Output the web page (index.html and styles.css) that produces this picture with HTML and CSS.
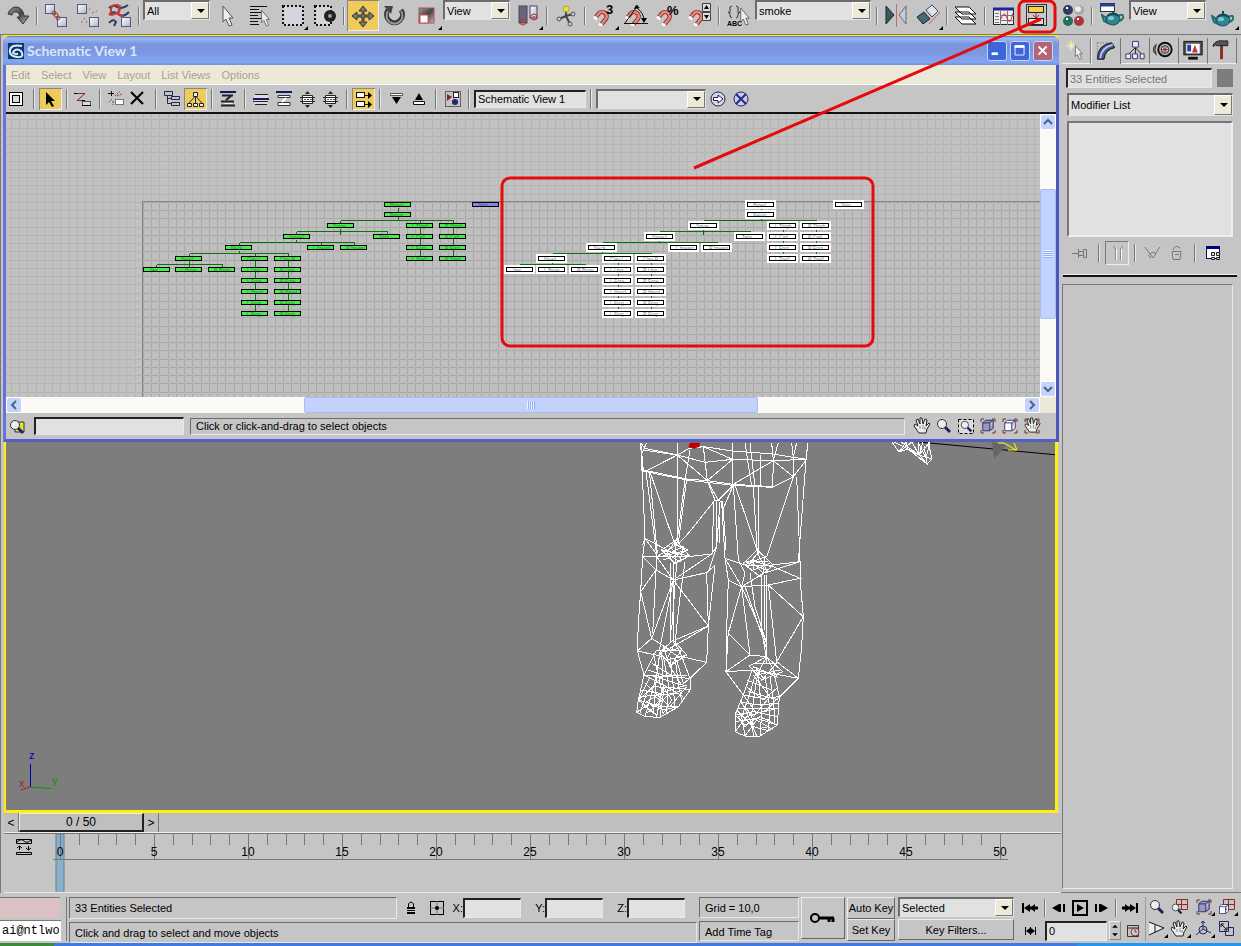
FILE: index.html
```html
<!DOCTYPE html>
<html lang="en">
<head>
<meta charset="utf-8">
<title>Schematic View 1</title>
<link rel="stylesheet" href="styles.css">
</head>
<body>
<svg class="defs" aria-hidden="true">
  <defs>
    <linearGradient id="metal" x1="0" y1="0" x2="1" y2="1"><stop offset="0" stop-color="#999"/><stop offset=".5" stop-color="#444"/><stop offset="1" stop-color="#bbb"/></linearGradient>
    <linearGradient id="box" x1="0" y1="0" x2="1" y2="1"><stop offset="0" stop-color="#fff"/><stop offset="1" stop-color="#b0b2cc"/></linearGradient>
    <symbol id="sq" viewBox="0 0 10 10"><rect x=".5" y=".5" width="9" height="9" fill="url(#box)" stroke="#555a80"/></symbol>
    <symbol id="fly" viewBox="0 0 4 4"><path d="M4 0V4H0Z" fill="#000"/></symbol>
    <symbol id="arrow" viewBox="0 0 14 22"><path d="M2 1V17L5 14L8 21L11 20L8 13H12Z" fill="#eee" stroke="#555"/></symbol>
    <symbol id="magnet" viewBox="0 0 20 20"><path d="M8 18L14 11C18 5 10 0 6 4L2 9" fill="none" stroke="#7c2520" stroke-width="5" transform="translate(1 1)"/><path d="M8 18L14 11C18 5 10 0 6 4L2 9" fill="none" stroke="#e98478" stroke-width="3" transform="translate(1 1)"/><path d="M7 17L11 20M1 9L5 12" stroke="#fff" stroke-width="3"/></symbol>
    <symbol id="teapot" viewBox="0 0 24 18"><path d="M4 8L1 6L3 12L7 14ZM17 7Q23 4 22 9Q21 12 17 12" fill="none" stroke="#236c78" stroke-width="2"/><ellipse cx="12" cy="10" rx="7" ry="6" fill="#2e8795" stroke="#1c4e58"/><path d="M6 7Q12 3 18 7M12 4V1" stroke="#164c56" fill="none" stroke-width="2"/><ellipse cx="10" cy="9" rx="3" ry="2" fill="#80c9cf"/></symbol>
    <symbol id="lens" viewBox="0 0 16 16"><path d="M9 9L14 14" stroke="#22226c" stroke-width="3"/><circle cx="6" cy="6" r="4.500" fill="#e8edf4" stroke="#333"/><path d="M4 6Q4 4 6 4" stroke="#fff" fill="none"/></symbol>
    <symbol id="hand" viewBox="0 0 18 18"><path d="M6 16L1 9L2 7L5 9L3 3L5 2L7 7V1H9L10 7L12 2L14 3L13 9L16 6L17 7L14 12L13 16Z" fill="#eee" stroke="#222"/><path d="M7 9V12M10 8V12M12 10V13" stroke="#888"/></symbol>
    <symbol id="cube" viewBox="0 0 16 16"><path d="M2 5H10V14H2ZM2 5L5 2H14L10 5M14 2V11L10 14" fill="var(--face)" stroke="#23236e"/></symbol>
    <symbol id="brk" viewBox="0 0 16 16"><path d="M1 4V1H4M12 1H15V4M15 12V15H12M4 15H1V12" fill="none" stroke="#7c3020"/></symbol>
    <symbol id="layer" viewBox="0 0 17 17"><path d="M3.500 4.500H13.500V12.500H3.500Z" fill="#fff" stroke="#222"/><path d="M1 6.500H16M1 10.500H16" stroke="#222"/><path d="M2 8.500H15" stroke="#555" stroke-dasharray="2 1"/><path d="M6 3L8.500 0L11 3ZM6 14L8.500 17L11 14Z" fill="#222"/></symbol>
  </defs>
</svg>

<div class="app">
  <header class="bar" aria-label="Main toolbar">
    <button class="tool" aria-label="Redo"><svg viewBox="0 0 32 30"><path d="M6 13C9 3 21 4 22 15H27L21 23L15 16H18C17 9 11 10 10 14Z" fill="url(#metal)" stroke="#333"/></svg></button>
    <i class="sep"></i>
    <button class="tool" aria-label="Link"><svg viewBox="0 0 32 30"><use href="#sq" x="5" y="3" width="10" height="10"/><use href="#sq" x="17" y="16" width="10" height="10"/><circle cx="14" cy="12" r="2" fill="none" stroke="#a0392b"/><circle cx="16" cy="14" r="2" fill="none" stroke="#a0392b"/><circle cx="18" cy="17" r="2" fill="none" stroke="#a0392b"/></svg></button>
    <button class="tool" aria-label="Unlink"><svg viewBox="0 0 32 30"><use href="#sq" x="5" y="3" width="10" height="10"/><use href="#sq" x="17" y="16" width="10" height="10"/><path d="M17 9L20 6M20 12L25 10M13 17L9 22M15 20L13 24" stroke="#b45" stroke-dasharray="2 2"/></svg></button>
    <button class="tool" aria-label="Bind to space warp"><svg viewBox="0 0 32 30"><path d="M5 7Q9 3 13 6T24 4M5 14Q9 9 14 13T25 11M5 22Q9 17 12 21L10 25" stroke="#2c3d68" stroke-width="2" fill="none"/><path d="M7 11Q6 4 12 4T15 11L8 14Q5 14 7 11M16 4L14 13L20 16" stroke="#c33" fill="none" stroke-width="2"/><use href="#sq" x="17" y="16" width="10" height="10"/></svg></button>
    <i class="sep"></i>
    <span class="combo filter"><select aria-label="Selection filter"><option>All</option></select></span>
    <button class="tool" aria-label="Select object"><svg viewBox="0 0 32 30"><use href="#arrow" x="8" y="4" width="14" height="22"/></svg></button>
    <button class="tool" aria-label="Select by name"><svg viewBox="0 0 32 30"><path d="M5 5.500H22M5 8.500H14M5 11.500H18M5 14.500H13M5 17.500H16M5 20.500H13M5 23.500H14" stroke="#111"/><use href="#arrow" x="15" y="8" width="11" height="18"/></svg></button>
    <button class="tool" aria-label="Selection region"><svg viewBox="0 0 32 30"><rect x="6" y="5" width="20" height="19" fill="#d5d5dc" stroke="#111" stroke-width="2" stroke-dasharray="2 2"/><use href="#fly" x="27" y="25" width="4" height="4"/></svg></button>
    <button class="tool" aria-label="Window crossing"><svg viewBox="0 0 32 30"><rect x="6" y="5" width="16" height="19" fill="#d5d5dc" stroke="#111" stroke-width="2" stroke-dasharray="2 2"/><circle cx="21" cy="15" r="6" fill="#222"/><circle cx="21" cy="15" r="2" fill="#99a"/></svg></button>
    <i class="sep"></i>
    <button class="tool on" aria-label="Move"><svg viewBox="0 0 32 30"><path d="M16 5L20 10H17V14H22V11L27 15L22 19V16H17V21H20L16 26L12 21H15V16H10V19L5 15L10 11V14H15V10H12Z" fill="#777" stroke="#333"/></svg></button>
    <button class="tool" aria-label="Rotate"><svg viewBox="0 0 32 30"><path d="M9 9A8 8 0 1 0 22 9" fill="none" stroke="#333" stroke-width="5"/><path d="M9 10A8 8 0 1 0 22 10" fill="none" stroke="#999" stroke-width="2"/><path d="M5 5L14 5L12 13Z" fill="#444"/></svg></button>
    <button class="tool" aria-label="Scale"><svg viewBox="0 0 32 30"><rect x="8" y="7" width="15" height="15" fill="url(#metal)" stroke="#a55"/><rect x="9" y="14" width="8" height="8" fill="#fff" stroke="#d44"/><use href="#fly" x="27" y="25" width="4" height="4"/></svg></button>
    <span class="combo coord"><select aria-label="Reference coordinate system"><option>View</option></select></span>
    <button class="tool" aria-label="Pivot center"><svg viewBox="0 0 32 30"><rect x="7" y="5" width="8" height="17" fill="#667" stroke="#446"/><rect x="18" y="5" width="7" height="12" fill="url(#box)" stroke="#446"/><circle cx="11" cy="21" r="3" fill="none" stroke="#b33"/><circle cx="22" cy="16" r="3" fill="none" stroke="#b33"/><circle cx="11" cy="21" r="1" fill="#b33"/><circle cx="22" cy="16" r="1" fill="#b33"/><use href="#fly" x="27" y="25" width="4" height="4"/></svg></button>
    <i class="sep"></i>
    <button class="tool" aria-label="Manipulate"><svg viewBox="0 0 32 30"><path d="M16 7V15L23 13M16 15L9 18M16 15L20 23" stroke="#444" stroke-width="2" fill="none"/><circle cx="16" cy="8" r="3" fill="#e9df35" stroke="#aa3"/><circle cx="23" cy="13" r="2" fill="#ccc" stroke="#555"/><circle cx="9" cy="18" r="2" fill="#ccc" stroke="#555"/><circle cx="20" cy="23" r="2" fill="#ccc" stroke="#555"/></svg></button>
    <i class="sep"></i>
    <button class="tool" aria-label="Snap"><svg viewBox="0 0 32 30"><use href="#magnet" x="5" y="8" width="17" height="17"/><text x="18" y="13" class="snap">3</text><use href="#fly" x="27" y="25" width="4" height="4"/></svg></button>
    <button class="tool" aria-label="Angle snap"><svg viewBox="0 0 32 30"><use href="#magnet" x="5" y="8" width="17" height="17"/><path d="M4 22.500H28M5 22L18 4M17 7Q24 12 24 20" stroke="#111" fill="none"/><path d="M14 8L16 4L20 7ZM21 17H27L24 22Z"/></svg></button>
    <button class="tool" aria-label="Percent snap"><svg viewBox="0 0 32 30"><use href="#magnet" x="4" y="8" width="17" height="17"/><text x="15" y="14" class="snap">%</text></svg></button>
    <button class="tool" aria-label="Spinner snap"><svg viewBox="0 0 32 30"><use href="#magnet" x="4" y="8" width="17" height="17"/><path d="M18.500 2.500H26.500V10.500H18.500ZM18.500 11.500H26.500V19.500H18.500Z" fill="#ddd" stroke="#444"/><path d="M20 8L22.500 4L25 8ZM20 14L22.500 18L25 14Z"/></svg></button>
    <i class="sep"></i>
    <button class="tool" aria-label="Named selection sets"><svg viewBox="0 0 32 30"><path d="M10 5Q7 5 8 9T6 11Q8 11 8 14T10 17M14 5Q17 5 16 9T18 11Q16 11 16 14T14 17" stroke="#333" fill="none"/><text x="5" y="25" class="abc">ABC</text><use href="#arrow" x="17" y="6" width="12" height="19"/></svg></button>
    <span class="combo sets"><select aria-label="Named selection set"><option>smoke</option></select></span>
    <i class="sep"></i>
    <button class="tool" aria-label="Mirror"><svg viewBox="0 0 32 30"><path d="M6 5L14 14L6 23Z" fill="#355c5b" stroke="#223"/><path d="M26 5L19 14L26 23Z" fill="#c2cbd6" stroke="#667"/><path d="M16.500 3V26" stroke="#c66"/></svg></button>
    <button class="tool" aria-label="Align"><svg viewBox="0 0 32 30"><path d="M5 16L12 11L18 18L11 23Z" fill="#456b73" stroke="#223"/><path d="M14 9L20 4L26 10L20 16Z" fill="#e0e4ea" stroke="#446"/><path d="M17 23L28 11" stroke="#d55"/><use href="#fly" x="27" y="25" width="4" height="4"/></svg></button>
    <i class="sep"></i>
    <button class="tool" aria-label="Layers"><svg viewBox="0 0 32 30"><path d="M5 16H19L26 23H12ZM5 11H19L26 18H12ZM5 6H19L26 13H12Z" fill="#fff" stroke="#111"/></svg></button>
    <i class="sep"></i>
    <button class="tool" aria-label="Curve editor"><svg viewBox="0 0 32 30"><rect x="5.500" y="7.500" width="20" height="16" fill="#eee" stroke="#223"/><path d="M5 8H26" stroke="#22229a" stroke-width="3"/><path d="M7 12.500H11M7 15.500H11M7 18.500H11M7 21.500H11M12.500 10V24M19.500 10V24M12 14.500H26M12 19.500H26" stroke="#777"/><path d="M13 18Q16 8 19 17T25 12" stroke="#c33" fill="none"/></svg></button>
    <button class="tool" aria-label="Schematic view"><svg viewBox="0 0 32 30"><rect x="6.500" y="3.500" width="20" height="21" fill="#c8c8c8" stroke="#333"/><rect x="8.500" y="5.500" width="15" height="6" fill="#f8d24a" stroke="#222"/><rect x="8.500" y="17.500" width="15" height="6" fill="#ddd" stroke="#222"/><path d="M16 12V16M13 14L16 17L19 14" stroke="#b22" fill="none"/></svg></button>
    <button class="tool material" aria-label="Material editor"><svg viewBox="0 0 32 30"><circle cx="11" cy="9" r="5" fill="#2e3c63"/><circle cx="22" cy="9" r="5" fill="#aaa"/><circle cx="21" cy="8" r="3" fill="#eee"/><circle cx="11" cy="20" r="5" fill="#23705a"/><circle cx="22" cy="20" r="5" fill="#a5373d"/><path d="M9 7H11M9 18H11M20 18H22" stroke="#fff" stroke-width="2"/></svg></button>
    <i class="sep"></i>
    <button class="tool" aria-label="Render scene"><svg viewBox="0 0 32 30"><use href="#teapot" x="6" y="8" width="24" height="18"/><rect x="5.500" y="2.500" width="14" height="8" fill="#fff" stroke="#333"/><path d="M5 4H20" stroke="#2c3c9a" stroke-width="3"/></svg></button>
    <span class="combo render"><select aria-label="Render type"><option>View</option></select></span>
    <button class="tool" aria-label="Quick render"><svg viewBox="0 0 32 30"><use href="#teapot" x="3" y="9" width="24" height="18"/><use href="#fly" x="27" y="25" width="4" height="4"/></svg></button>
  </header>

  <div class="work">
    <main class="stage">
      <div class="viewport">
        <svg class="scene" aria-label="Perspective viewport">
          <svg x="614" y="392" width="210" height="320" viewBox="0 0 630 960">
            <path class="mesh" d="M62 38L70 120L200 147L262 152L340 163L460 170L520 140L560 88L562 38M68 60L172 75L208 55L250 50L340 63L460 72L520 82L562 88M62 38L75 55L172 75L255 97L338 88L460 92L562 88M172 38V340M172 75L80 122M210 60L195 150M250 50L262 152M250 50L338 88L262 152M338 38V165M375 38L395 170M390 38L405 170M420 75V170M455 38L460 92L340 163M475 38L460 92L520 140M515 38L520 82L530 38M460 92L458 170M520 82V140M80 38L66 70M172 75L262 152M62 38L66 122L78 125L200 150L340 166L458 172"/>
            <path class="mesh" d="M65 80L75 325L108 370M78 125L110 375M88 122L112 370M90 125L165 345M200 147L175 340M195 150L170 345M262 152L285 210L205 310L172 345M262 152L295 210L340 165M290 210V345M280 215L278 370M300 215L290 350L265 425M305 215L315 385M298 260L300 340M285 210L308 215L318 360M75 325L68 380L62 485L55 580L52 663L72 735M68 345L75 325L160 370M68 380H110L205 380L275 372L290 350M68 380L108 420L160 450L260 428L285 405M110 380L160 450L275 372M108 375V420L98 610M108 420L62 485L95 625L160 450M160 400V640M150 400V640M170 400L155 600M160 450L265 588L165 630M265 588L150 655M260 428L265 588L260 697L185 680M285 405L265 588M195 395L180 500L165 640M160 450L118 660M52 663L95 625L150 660M52 663L130 680M260 697L210 745"/>
            <path class="mesh" d="M125 360L168 330L208 378L165 400ZM110 380L168 345L205 360L130 378L190 350L180 395L140 370L168 330L165 400M125 360L208 378M130 390L195 365M145 345L185 390M118 668L160 630L200 675L155 705ZM130 650L190 690L165 640L140 690L200 675M110 660H185L150 710L130 650M118 668L178 655"/>
            <path class="mesh" d="M110 660L72 735L55 810L50 847L75 860L120 862L175 830L210 780V745L185 680M72 735L210 745M90 735L185 765L210 745M55 810L100 770L180 775L210 780M55 810L125 830L175 830M62 780L120 790L200 765M50 847L90 820L130 840L175 830M75 860L95 790L110 735L120 665M120 862L130 790L125 665M140 850L145 760L130 680M165 840L160 770L150 680M185 810L175 760L165 680M72 735L140 770L190 800M100 670L125 780L110 860M90 740L55 810L110 855M75 760L150 830L200 770M110 735L100 850L75 830M150 710L185 765M80 850L140 800L185 780M130 735L80 790L60 850M95 700L160 740M170 690L190 760M85 720L130 735L200 735M60 800L170 790M80 815L105 800L120 810L100 830ZM130 770L155 810L130 850L118 820Z"/>
            <path class="mesh" d="M340 165L355 390M345 165L415 370M400 170L412 370M415 170V375M340 165L308 240M520 140L440 380M530 140L540 395M558 90L535 395M315 385L325 450L320 600L318 725L370 795M315 385L375 405L455 405L540 395M325 450L365 470L445 465L540 445L455 408M315 385L365 470L430 430L540 395V445L550 560L545 650L535 745L480 800M355 390L375 430L365 470L325 610L390 675L440 680M365 470L390 675M365 470L440 640M375 470L438 650M390 430L405 530L440 640M425 435V600L440 690M433 435V600M445 465L550 560L470 695ZM440 435V700M318 725L390 675M318 725L400 720L535 745L470 695M325 600L318 725"/>
            <path class="mesh" d="M370 400L412 360L460 405L420 440ZM375 405L435 380L430 430L390 390L455 410M380 415L412 370L440 420L375 395L445 395M400 380V420L450 400M388 708L440 680L488 725L425 750ZM400 710L470 740L440 680L410 735L480 720M400 700H470L430 745L405 710"/>
            <path class="mesh" d="M400 710L370 795L345 855V905L375 918H420L472 885L478 800L460 720M370 795L425 805L478 800M360 815L410 825L478 820M352 835H475M345 855L400 845L472 860M345 875L410 865L472 885M375 918L365 860L390 790L410 720M400 918L395 850L405 780L415 720M420 918L425 850L415 730M445 902L450 840L435 740M465 885L460 810L450 740M345 855L375 885L420 860L470 885M345 905L380 860L440 840L478 800M375 918L410 870L460 900M370 795L410 850L475 835M380 770L430 810L475 770M350 840L400 890L445 902M385 785L475 810M365 815L390 870L410 918M380 750L455 780M400 735L450 800L400 860L365 820M355 860L385 845L400 870L375 890ZM425 865L450 870L445 890L420 895Z"/>
            <path d="M210 38H240L238 50L222 56L205 52Z" fill="#c00000"/>
          </svg>
          <path class="black-line" d="M902 403L1052 417"/>
          <path class="mesh thin" d="M886 404L893 414L902 411L913 417L921 426L926 421L922 404M888 404L902 411L900 404L893 414L906 404L913 417L912 404L920 420L924 404L913 417L926 421M895 404L913 417L917 404M902 411L921 426L918 408"/>
          <path d="M986 404L1000 407L992 417L988 420Z" fill="#666"/>
          <path d="M998 405L1010 412M998 405H992M1002 412H1011L1008 405" stroke="#ff0" fill="none"/>
          <path d="M24.500 726V749" stroke="#00b"/><path d="M24 749L45 750.500" stroke="#090"/><path d="M24 749L15 752" stroke="#a22"/>
          <text x="23" y="721" class="axis" fill="#00b">z</text><text x="46" y="746" class="axis" fill="#090">y</text><text x="13" y="749" class="axis" fill="#a22">x</text>
        </svg>
      </div>

      <section class="window" aria-label="Schematic View 1">
        <div class="title">
          <svg class="logo" viewBox="0 0 16 16"><rect width="16" height="16" fill="#0d386e"/><path d="M14 3Q3 1 2 7T9 14T13 8Q9 5 6 8T10 11" fill="none" stroke="#d7f0fa" stroke-width="2"/></svg>
          <h1>Schematic View 1</h1>
          <button class="cap" aria-label="Minimize"><svg viewBox="0 0 20 20"><path d="M4 13H11" stroke="#fff" stroke-width="3"/></svg></button>
          <button class="cap" aria-label="Maximize"><svg viewBox="0 0 20 20"><path d="M4.500 4.500H14.500V14.500H4.500Z" stroke="#fff" fill="none"/><path d="M4 5H15" stroke="#fff" stroke-width="3"/></svg></button>
          <button class="cap close" aria-label="Close"><svg viewBox="0 0 20 20"><path d="M5 5L14 14M14 5L5 14" stroke="#fff" stroke-width="2"/></svg></button>
        </div>
        <nav class="menu"><button>Edit</button><button>Select</button><button>View</button><button>Layout</button><button>List Views</button><button>Options</button></nav>
        <div class="tools">
          <button class="tb" aria-label="Display floater"><svg viewBox="0 0 23 24"><rect x="3.500" y="5.500" width="13" height="13" fill="#fff" stroke="#000"/><rect x="6.500" y="8.500" width="7" height="7" fill="#ddd" stroke="#000"/></svg></button><i class="sep"></i>
          <button class="tb on" aria-label="Select"><svg viewBox="0 0 23 24"><path d="M7 4V17L10 14L13 19L15 18L12 13H16Z"/></svg></button><i class="sep"></i>
          <button class="tb" aria-label="Connect"><svg viewBox="0 0 23 24"><path d="M4 6.500H13L5 13.500H11" stroke="#8d2424" fill="none"/><path d="M2 6.500H5M10 13.500H13" stroke="#000"/><rect x="10.500" y="14.500" width="8" height="4" fill="#ddd" stroke="#555"/><path d="M10 18.500H19" stroke="#000"/></svg></button><i class="sep"></i>
          <button class="tb" aria-label="Unlink"><svg viewBox="0 0 23 24"><path d="M3 6.500H9M6.500 4V9" stroke="#111"/><path d="M10 9L15 4M7 12L4 15M8 14V18M12 9L17 7" stroke="#a33" stroke-dasharray="2 1"/><rect x="10.500" y="12.500" width="8" height="5" fill="#fff" stroke="#777"/></svg></button>
          <button class="tb" aria-label="Delete"><svg viewBox="0 0 23 24"><path d="M3 5L15 17M15 5L3 17" stroke="#000" stroke-width="2"/></svg></button><i class="sep"></i>
          <button class="tb" aria-label="Hierarchy"><svg viewBox="0 0 23 24"><path d="M3.500 4.500H11.500V8.500H3.500ZM10.500 9.500H18.500V12.500H10.500ZM10.500 15.500H18.500V18.500H10.500ZM6.500 8.500V16.500H10.500M6.500 11.500H10.500" fill="none" stroke="#22274e"/></svg></button>
          <button class="tb on" aria-label="References"><svg viewBox="0 0 23 24"><path d="M11.500 8L5 15M11.500 8V15M11.500 8L18 15" stroke="#333"/><path d="M9.500 4.500H13.500V8.500H9.500ZM3.500 15.500H7.500V18.500H3.500ZM9.500 15.500H13.500V18.500H9.500ZM15.500 15.500H19.500V18.500H15.500Z" fill="#eee" stroke="#223"/></svg></button><i class="sep"></i>
          <button class="tb" aria-label="Always arrange"><svg viewBox="0 0 23 24"><path d="M3 5H19" stroke="#171760" stroke-width="2"/><path d="M5 8.500H16M14 9L9 13M4 14.500H17M4 18.500H18" stroke="#222" stroke-width="2"/><path d="M7 16.500H15" stroke="#eee"/></svg></button><i class="sep"></i>
          <button class="tb" aria-label="Arrange children"><svg viewBox="0 0 23 24"><path d="M4 8H18V17H4Z" fill="#ddd"/><path d="M5 7.500H18M3 14.500H18M5 17.500H17" stroke="#222"/><path d="M3 12H19" stroke="#171770" stroke-width="2"/></svg></button>
          <button class="tb" aria-label="Arrange selected"><svg viewBox="0 0 23 24"><path d="M3 5H19" stroke="#171760" stroke-width="2"/><path d="M5 8.500H17V10.500H5ZM5 15.500H17V18.500H5Z" fill="#fff" stroke="#333"/><path d="M13 11L9 15" stroke="#fff" stroke-width="2"/></svg></button>
          <button class="tb" aria-label="Free all"><svg viewBox="0 0 23 24"><use href="#layer" x="3" y="4" width="17" height="17"/></svg></button>
          <button class="tb" aria-label="Free selected"><svg viewBox="0 0 23 24"><use href="#layer" x="3" y="4" width="17" height="17"/></svg></button><i class="sep"></i>
          <button class="tb on" aria-label="Move children"><svg viewBox="0 0 23 24"><rect x="4.500" y="4.500" width="8" height="5" fill="#fff" stroke="#111"/><rect x="4.500" y="13.500" width="8" height="5" fill="#fff" stroke="#111"/><path d="M12 7.500H17M12 16.500H17" stroke="#111"/><path d="M16 4L20 7.500L16 11ZM16 13L20 16.500L16 20Z"/></svg></button><i class="sep"></i>
          <button class="tb" aria-label="Expand"><svg viewBox="0 0 23 24"><path d="M5.500 6.500H17.500V8.500H5.500Z" fill="#fff" stroke="#555"/><path d="M7 10H16L11.500 17Z"/></svg></button>
          <button class="tb" aria-label="Collapse"><svg viewBox="0 0 23 24"><path d="M5.500 14.500H16.500V17.500H5.500Z" fill="#fff" stroke="#111"/><path d="M7 13H15L11 6Z"/></svg></button><i class="sep"></i>
          <button class="tb" aria-label="Preferences"><svg viewBox="0 0 23 24"><rect x="4.500" y="4.500" width="15" height="15" fill="none" stroke="#000" stroke-dasharray="1 1"/><path d="M6 7L11 10L6 14Z" fill="#823"/><rect x="12.500" y="5.500" width="5" height="5" fill="#fff" stroke="#222"/><circle cx="14" cy="15" r="3" fill="#23236e"/></svg></button><i class="sep"></i>
          <input class="field view-name" aria-label="View name" value="Schematic View 1"><i class="sep"></i>
          <span class="combo bookmark"><select aria-label="Bookmark"><option></option></select></span>
          <button class="tb" aria-label="Go to bookmark"><svg viewBox="0 0 23 24"><circle cx="12" cy="12" r="7" fill="#d8d8e4" stroke="#23235c"/><path d="M7.500 10.500H12V8L17 12L12 16V13.500H7.500Z" fill="#fff" stroke="#23235c"/></svg></button>
          <button class="tb" aria-label="Delete bookmark"><svg viewBox="0 0 23 24"><circle cx="12" cy="12" r="7" fill="#ccd" stroke="#23235c"/><path d="M7 7L17 17M17 7L7 17" stroke="#1f2b8c" stroke-width="2"/></svg></button>
        </div>
        <div class="graph">
          <svg class="canvas" aria-label="Schematic graph">
            <defs><pattern id="grid" x="137" y="88" width="33" height="33" patternUnits="userSpaceOnUse"><path d="M0 0H33V1H0ZM0 8H33V9H0ZM0 16H33V17H0ZM0 25H33V26H0ZM0 0V33H1V0ZM8 0V33H9V0ZM16 0V33H17V0ZM25 0V33H26V0Z"/></pattern></defs>
            <rect width="100%" height="100%" fill="url(#grid)" opacity=".45"/>
            <svg x="136" y="87" width="100%" height="100%"><rect width="100%" height="100%" class="world"/><rect width="100%" height="1" class="edge"/><rect width="1" height="100%" class="edge"/></svg>
            <rect x="137" y="88" width="100%" height="100%" fill="url(#grid)" opacity=".8"/>
            <g id="tree"></g>
          </svg>
          <div class="vscroll"><button class="sb" aria-label="Scroll up"><svg viewBox="0 0 14 14"><path d="M3 9L7 5L11 9"/></svg></button><i class="gap59"></i><i class="thumb v"></i><i class="gap62"></i><button class="sb" aria-label="Scroll down"><svg viewBox="0 0 14 14"><path d="M3 5L7 9L11 5"/></svg></button></div>
          <div class="hscroll"><button class="sb" aria-label="Scroll left"><svg viewBox="0 0 14 14"><path d="M9 3L5 7L9 11"/></svg></button><i class="gap282"></i><i class="thumb h"></i><i class="gap266"></i><button class="sb" aria-label="Scroll right"><svg viewBox="0 0 14 14"><path d="M5 3L9 7L5 11"/></svg></button></div>
          <div class="corner"></div>
        </div>
        <footer class="foot">
          <button class="tb" aria-label="Search"><svg viewBox="0 0 23 24"><path d="M9 7H18V17H9Z" fill="#e9df35" stroke="#333"/><use href="#lens" x="3" y="4" width="16" height="16"/></svg></button>
          <input class="field search" aria-label="Search name">
          <output class="sunk hint">Click or click-and-drag to select objects</output>
          <div class="nav-icons">
            <button class="nv" aria-label="Pan"><svg viewBox="0 0 22 20"><use href="#hand" x="2" y="1" width="18" height="18"/></svg></button>
            <button class="nv" aria-label="Zoom"><svg viewBox="0 0 22 20"><use href="#lens" x="3" y="2" width="16" height="16"/></svg></button>
            <button class="nv" aria-label="Zoom region"><svg viewBox="0 0 22 20"><rect x="3.500" y="3.500" width="15" height="14" fill="#ddd" stroke="#000" stroke-dasharray="3 2"/><use href="#lens" x="5" y="4" width="13" height="13"/></svg></button>
            <button class="nv dark" aria-label="Zoom extents"><svg viewBox="0 0 22 20"><use href="#brk" x="3" y="2" width="16" height="16"/><use href="#cube" x="4" y="2" width="14" height="15"/></svg></button>
            <button class="nv" aria-label="Zoom extents selected"><svg viewBox="0 0 22 20"><use href="#brk" x="3" y="2" width="16" height="16"/><use href="#cube" x="4" y="2" width="14" height="15"/></svg></button>
            <button class="nv" aria-label="Pan to selected"><svg viewBox="0 0 22 20"><use href="#brk" x="3" y="2" width="16" height="16"/><use href="#hand" x="3" y="1" width="17" height="17"/></svg></button>
          </div>
        </footer>
      </section>

      <div class="slider"><button class="step" aria-label="Previous frame">&lt;</button><button class="frame">0 / 50</button><button class="step" aria-label="Next frame">&gt;</button></div>
      <div class="track">
        <button class="curve" aria-label="Open mini curve editor"><svg viewBox="0 0 18 18"><path d="M1.500 1.500H16.500V5.500H1.500ZM1.500 14.500H16.500V16.500H1.500ZM4.500 12V8M2 10L4.500 8L7 10M13.500 8V12M11 10L13.500 12L16 10M2 4Q6 0 9 3T16 2" fill="none" stroke="#000"/></svg></button>
        <svg class="ruler" aria-label="Track bar"><g id="ticks"></g></svg>
      </div>
    </main>

    <aside class="panel">
      <div class="tabs">
        <button class="tab" aria-label="Create"><svg viewBox="0 0 28 26"><path d="M9 3V13M4 8H14M6 5L12 11M12 5L6 11" stroke="#fff8b0"/><use href="#arrow" x="11" y="7" width="12" height="16"/></svg></button>
        <button class="tab cur" aria-label="Modify"><svg viewBox="0 0 28 26"><path d="M5 21Q5 6 20 4L23 9Q13 11 12 21Z" fill="#425387" stroke="#111"/><path d="M8 20Q9 9 21 6" stroke="#b5c2e8" stroke-width="2" fill="none"/><path d="M5 4V20M5 4H20" stroke="#555" stroke-dasharray="1 2"/></svg></button>
        <button class="tab" aria-label="Hierarchy"><svg viewBox="0 0 28 26"><path d="M14.500 10L7 17M14.500 10V17M14.500 10L21 17" stroke="#222"/><path d="M11.500 3.500H17.500V9.500H11.500ZM4.500 16.500H9.500V21.500H4.500ZM11.500 16.500H16.500V21.500H11.500ZM19.500 16.500H23.500V21.500H19.500Z" fill="#eef" stroke="#336"/></svg></button>
        <button class="tab" aria-label="Motion"><svg viewBox="0 0 28 26"><circle cx="15" cy="12" r="7" fill="#bbb" stroke="#111" stroke-width="2"/><circle cx="15" cy="12" r="4" fill="#ddd" stroke="#333"/><path d="M15 8V16M11 12H19M12 9L18 15M18 9L12 15" stroke="#833"/><path d="M6 6Q3 12 6 18M4 8Q2 12 4 16" stroke="#111" fill="none"/></svg></button>
        <button class="tab" aria-label="Display"><svg viewBox="0 0 28 26"><rect x="4.500" y="3.500" width="19" height="14" fill="#555" stroke="#111"/><rect x="7" y="6" width="14" height="10" fill="#fff"/><path d="M8 7H12V14H8Z" fill="#24a"/><path d="M13 15L16 7L19 15Z" fill="#c34"/><path d="M9 21H19" stroke="#111" stroke-width="3"/></svg></button>
        <button class="tab" aria-label="Utilities"><svg viewBox="0 0 28 26"><path d="M13.500 8V22" stroke="#8c2d22" stroke-width="3"/><path d="M5 7Q8 2 15 3H20V8H9Q7 6 5 9Z" fill="#555" stroke="#222"/></svg></button>
      </div>
      <div class="name-row"><input class="field object-name" aria-label="Object name" value="33 Entities Selected"><button class="swatch" aria-label="Object color"></button></div>
      <span class="combo modifier"><select aria-label="Modifier list"><option>Modifier List</option></select></span>
      <div class="stack"></div>
      <div class="stack-tools">
        <button class="st" aria-label="Pin stack"><svg viewBox="0 0 24 24"><path d="M3 12.500H9M9.500 8V17M9.500 10.500H14.500V14.500H9.500M14.500 8.500H17.500V16.500H14.500Z" fill="none" stroke="#777"/></svg></button><i class="sep"></i>
        <button class="st end" aria-label="Show end result"><svg viewBox="0 0 24 24"><path d="M7 4L9.500 7V18M14.500 18V7L17 4" fill="none" stroke="#888"/><path d="M10.500 7V18M15.500 7V18" stroke="#fff"/></svg></button><i class="sep"></i>
        <button class="st" aria-label="Make unique"><svg viewBox="0 0 24 24"><path d="M4 6L9 13M19 6L14 13M9 13L12 17L15 13L12 11ZM7 14L10 17" fill="none" stroke="#777"/></svg></button>
        <button class="st" aria-label="Remove modifier"><svg viewBox="0 0 24 24"><path d="M7 10.500H16L15 18.500H8ZM8 9Q10 3 15 7M10 13.500H14" fill="none" stroke="#777"/></svg></button><i class="sep"></i>
        <button class="st" aria-label="Configure sets"><svg viewBox="0 0 24 24"><rect x="5.500" y="5.500" width="13" height="12" fill="#fff" stroke="#115"/><path d="M5 6.500H19" stroke="#00008b" stroke-width="3"/><path d="M10.500 11.500H13.500V14.500H10.500ZM15.500 11.500H18.500V14.500H15.500ZM10.500 16.500H13.500V18.500H10.500ZM15.500 16.500H18.500V18.500H15.500Z" fill="#ddd" stroke="#222"/></svg></button>
      </div>
      <hr>
      <div class="rollout"></div>
    </aside>
  </div>

  <footer class="status">
    <div class="listener"><output class="pink"></output><input aria-label="Script listener" value="ai@ntlwo"></div>
    <div class="info">
      <div class="row">
        <output class="sunk grow">33 Entities Selected</output>
        <button class="ico" aria-label="Lock selection"><svg viewBox="0 0 12 16"><path d="M3.500 8V4Q6 0 8.500 4V8" fill="none" stroke="#000"/><path d="M2 7H10V14H2Z"/><path d="M2 9.500H10M2 11.500H10" stroke="#ccc"/></svg></button>
        <button class="ico wide" aria-label="Absolute mode"><svg viewBox="0 0 16 16"><rect x="1.500" y="1.500" width="13" height="13" fill="none" stroke="#000"/><path d="M8 1V15M1 8H15" stroke="#777"/><circle cx="8" cy="8" r="2"/></svg></button>
        <label class="axis-in">X:<input class="field"></label><label class="axis-in">Y:<input class="field"></label><label class="axis-in">Z:<input class="field"></label>
      </div>
      <output class="sunk prompt">Click and drag to select and move objects</output>
    </div>
    <div class="gridinfo"><output class="sunk">Grid = 10,0</output><button class="sunk">Add Time Tag</button></div>
    <button class="raised bigkey" aria-label="Set keys"><svg viewBox="0 0 26 12"><circle cx="5" cy="6" r="4" fill="none" stroke="#000" stroke-width="2"/><path d="M9 6H24M19 6V10M23 6V10" stroke="#000" stroke-width="3"/></svg></button>
    <div class="keys"><button class="raised">Auto Key</button><button class="raised">Set Key</button></div>
    <div class="filters"><span class="combo"><select aria-label="Key set"><option>Selected</option></select></span><button class="raised">Key Filters...</button></div>
    <div class="play">
      <div class="row">
        <button class="pb" aria-label="Go to start"><svg viewBox="0 0 18 12"><path d="M2 1V11" stroke="#000" stroke-width="2"/><path d="M3 6L9 2V10ZM9 6L14 2V10Z"/><path d="M9 6H17" stroke="#000" stroke-width="3"/></svg></button><i class="sep"></i>
        <button class="pb" aria-label="Previous frame"><svg viewBox="0 0 18 12"><path d="M2 6L9 2V10Z"/><path d="M10 2V10M14 2V10" stroke="#000" stroke-width="2"/></svg></button>
        <button class="pb boxed" aria-label="Play"><svg viewBox="0 0 18 16"><rect x="2" y="1" width="14" height="14" fill="none" stroke="#000" stroke-width="2"/><path d="M6 4L13 8L6 12Z"/></svg></button>
        <button class="pb" aria-label="Next frame"><svg viewBox="0 0 18 12"><path d="M16 6L9 2V10Z"/><path d="M4 2V10M8 2V10" stroke="#000" stroke-width="2"/></svg></button><i class="sep"></i>
        <button class="pb" aria-label="Go to end"><svg viewBox="0 0 18 12"><path d="M16 1V11" stroke="#000" stroke-width="2"/><path d="M15 6L9 2V10ZM9 6L4 2V10Z"/><path d="M1 6H9" stroke="#000" stroke-width="3"/></svg></button>
      </div>
      <div class="row">
        <button class="pb" aria-label="Key mode"><svg viewBox="0 0 18 12"><path d="M4.500 2V10M14.500 2V10M9.500 2V10" stroke="#000"/><path d="M5 6L9 3V9ZM14 6L10 3V9Z"/></svg></button>
        <input class="field time" aria-label="Current frame" value="0">
        <button class="spin" aria-label="Step frame"><svg viewBox="0 0 10 18"><path d="M2 6L5 3L8 6ZM2 12L5 15L8 12Z"/></svg></button>
        <button class="pb" aria-label="Time configuration"><svg viewBox="0 0 18 16"><path d="M3.500 2.500H14.500V13.500H3.500ZM3 5H15" fill="none" stroke="#333"/><circle cx="11" cy="9" r="4" fill="#ccc" stroke="#833"/><path d="M11 6V9H13" stroke="#833" fill="none"/></svg></button>
      </div>
    </div>
    <div class="views">
      <button aria-label="Zoom"><svg viewBox="0 0 22 20"><use href="#lens" x="3" y="2" width="16" height="16"/></svg></button>
      <button aria-label="Zoom all"><svg viewBox="0 0 22 20"><path d="M7.500 2.500H18.500V12.500H7.500ZM12.500 3V13M7 7.500H18" stroke="#922" fill="none"/><use href="#lens" x="2" y="6" width="12" height="12"/></svg></button>
      <button class="dark" aria-label="Zoom extents"><svg viewBox="0 0 22 20"><use href="#brk" x="3" y="2" width="16" height="16"/><use href="#cube" x="4" y="2" width="14" height="15"/><use href="#fly" x="18" y="15" width="4" height="4"/></svg></button>
      <button aria-label="Zoom extents all"><svg viewBox="0 0 22 20"><path d="M7.500 2.500H18.500V12.500H7.500ZM12.500 3V13M7 7.500H18" stroke="#922" fill="none"/><use href="#cube" x="2" y="6" width="12" height="12"/><use href="#fly" x="18" y="15" width="4" height="4"/></svg></button>
      <button aria-label="Field of view"><svg viewBox="0 0 22 20"><path d="M3 3L18 9L3 16M9 6V13" fill="#eee" stroke="#111"/><use href="#fly" x="18" y="15" width="4" height="4"/></svg></button>
      <button aria-label="Pan"><svg viewBox="0 0 22 20"><use href="#hand" x="1" y="1" width="18" height="18"/><use href="#fly" x="18" y="15" width="4" height="4"/></svg></button>
      <button aria-label="Arc rotate"><svg viewBox="0 0 22 20"><path d="M10 2V10L3 16M10 10L18 14M8 4L10 2L12 4" fill="none" stroke="#23236e"/><circle cx="10" cy="11" r="4" fill="none" stroke="#23236e"/><use href="#fly" x="18" y="15" width="4" height="4"/></svg></button>
      <button aria-label="Maximize viewport"><svg viewBox="0 0 22 20"><path d="M3.500 2.500H12.500V12.500H3.500ZM13 8.500H17.500V16.500H9.500V13" fill="none" stroke="#23236e"/><path d="M5 5L11 11M5 8V5H8M11 8V11H8" stroke="#111" fill="none"/></svg></button>
    </div>
  </footer>
  <div class="desk"><i></i><b></b><em></em></div>
  <svg class="marks" aria-hidden="true"><rect x="1019" y="1" width="36" height="31" rx="6"/><path d="M694 168L1041 19"/><rect x="502" y="178" width="371" height="168" rx="8"/></svg>
</div>
<script src="script.js"></script>
</body>
</html>
```
FILE: styles.css
```css
* { box-sizing: border-box; }
body { margin: 0; background: #c5c5c5; color: #000; font: 11px/14px "Liberation Sans", Arial, sans-serif; }
button, input, select, output { font: inherit; color: inherit; }
button { margin: 0; padding: 0; border: 0; background: none; }
svg { display: block; overflow: hidden; }
.defs { position: absolute; width: 0; height: 0; }
.app { position: relative; display: flex; flex-direction: column; min-height: 100vh; overflow: hidden; }
.sep { flex: none; align-self: center; width: 2px; height: 18px; margin: 0 2px; background: linear-gradient(90deg, #777 50%, #e8e8e8 50%); }

.field { min-width: 0; height: 18px; padding: 0 2px; background: #e1e1e1; border: 1px solid #e8e8e8; border-top: 2px solid #222; border-left: 2px solid #222; border-radius: 0; outline: 0; }
.combo { position: relative; display: block; flex: none; height: 20px; border: 1px solid #e4e4e4; border-top: 2px solid #6c6c6c; border-left: 2px solid #6c6c6c; background: #e1e1e1; }
.combo select { appearance: none; display: block; width: 100%; height: 100%; padding: 0 18px 0 2px; border: 0; border-radius: 0; background: none; outline: 0; }
.combo::after { content: ""; position: absolute; top: 0; right: 0; bottom: 0; width: 16px; background: #ece9d8; border: 1px solid #fff; border-right-color: #777; border-bottom-color: #777; pointer-events: none; }
.combo::before { content: ""; position: absolute; z-index: 1; top: 50%; right: 4px; margin-top: -2px; border: 4px solid transparent; border-top-color: #000; border-bottom: 0; pointer-events: none; }
.sunk { display: block; padding: 3px 5px; border: 1px solid #e8e8e8; border-top-color: #6c6c6c; border-left-color: #6c6c6c; text-align: left; white-space: nowrap; overflow: hidden; }
.raised { border: 1px solid #666; border-top-color: #eee; border-left-color: #eee; white-space: nowrap; }

.bar { display: flex; align-items: flex-start; height: 35px; padding-left: 2px; border-bottom: 1px solid #777; }
.tool { flex: none; width: 32px; height: 31px; }
.tool svg { width: 32px; height: 30px; }
.bar .sep { align-self: flex-start; margin-top: 7px; }
.on { background: #efcb5a; box-shadow: inset 1px 1px #888, inset -1px -1px #eee; }
.material { margin-left: 5px; }
.filter { width: 67px; margin: 0 3px 0 1px; }
.coord { width: 67px; margin-right: 2px; }
.sets { width: 116px; margin: 0 3px 0 1px; }
.render { width: 77px; margin: 0 2px; }
.snap { font: bold 13px "Liberation Sans", Arial, sans-serif; }
.abc { font: bold 7px "Liberation Sans", Arial, sans-serif; }

.work { display: flex; flex: 1; min-height: 0; }
.stage { position: relative; display: flex; flex: 1; flex-direction: column; min-width: 0; padding-left: 3px; border-left: 1px solid #777; }
.viewport { flex: 1; border: 3px solid #ffee10; border-left-width: 2px; margin-right: 3px; background: #7d7d7d; }
.scene { width: 100%; height: 100%; min-height: 720px; }
.mesh { fill: none; stroke: #fff; stroke-width: 3px; shape-rendering: crispEdges; }
.thin { stroke-width: 1px; }
.black-line { stroke: #000; }
.axis { font: 11px "Liberation Sans", Arial, sans-serif; }

.window { position: absolute; top: 1px; left: 2px; right: 2px; border: 3px solid #6574d8; border-top: 0; border-right-color: #4a58bb; border-bottom-color: #5060c4; border-radius: 7px 7px 0 0; background: #c5c5c5; }
.title { display: flex; align-items: center; gap: 3px; height: 29px; margin: 0 -3px; padding: 1px 6px 0 5px; border-radius: 7px 7px 0 0; background: linear-gradient(#5d72b5, #9dbcf3 2px, #7b95de 8px, #7b97e0 16px, #82a6f0 26px, #7390dd); }
.logo { width: 16px; height: 16px; }
h1 { flex: 1; margin: 0; color: #dce6fb; font: bold 14px/18px Lato, "Open Sans", sans-serif; }
.cap { width: 20px; height: 20px; border: 1px solid #c5d4fa; border-radius: 3px; background: #3d66d8; }
.cap.close { background: #b26478; }
.menu { display: flex; gap: 11px; height: 20px; padding: 0 5px; background: #ece9d8; border-bottom: 1px solid #fff; color: #a5a392; }
.tools { display: flex; align-items: center; height: 29px; border-bottom: 2px solid #111; }
.tools .sep { height: 20px; margin: 0 4px; }
.tb { flex: none; width: 23px; height: 23px; }
.tb svg { width: 23px; height: 24px; }
.tb.on { height: 22px; }
.view-name { width: 112px; }
.bookmark { width: 110px; }
.graph { display: grid; grid-template: 283px 16px / 1fr 16px; }
.canvas { width: 100%; height: 283px; background: #c2c2c2; shape-rendering: crispEdges; }
#grid path { fill: #a2a2a2; }
.world { fill: #bfbfbf; }
.edge { fill: #858585; }
.link { fill: none; stroke: #087408; }
.node { stroke: #000; }
.halo { fill: #fff; }
.label { font: 5px "Liberation Sans", Arial, sans-serif; fill: #234; opacity: .6; }
.vscroll, .hscroll { display: flex; background: #fbfaf6; }
.vscroll { flex-direction: column; }
.corner { background: #ece9d8; }
.sb { flex: none; width: 16px; height: 16px; border: 1px solid #fff; border-radius: 3px; background: #c3d3fb; }
.sb svg { width: 14px; height: 14px; fill: none; stroke: #4d6185; stroke-width: 2px; }
.thumb { display: flex; border: 1px solid #a5bdf5; border-radius: 2px; background: #c3d2fc; }
.thumb::after { content: ""; width: 8px; height: 8px; margin: auto; background: repeating-linear-gradient(#eef4fe 0 1px, #8cb0f8 1px 2px); }
.thumb.h::after { background: repeating-linear-gradient(90deg, #eef4fe 0 1px, #8cb0f8 1px 2px); }
.gap59 { flex: 59; } .v { flex: 129; } .gap62 { flex: 63; }
.gap282 { flex: 282; } .h { flex: 453; } .gap266 { flex: 266; }
.foot { display: flex; align-items: center; height: 26px; }
.search { width: 150px; margin: 0 6px 0 5px; }
.hint { flex: 1; height: 17px; padding: 0 5px; }
.nav-icons { display: flex; padding: 0 13px 0 6px; }
.nv, .views button { --face: #fff; width: 22px; height: 20px; }
.nv.dark, .views .dark { --face: #999ab8; }
.nv svg, .views svg { width: 22px; height: 20px; }

.slider { display: flex; height: 20px; background: #bfbfbf; border-bottom: 1px solid #eee; font-size: 12px; }
.step { width: 15px; border-right: 1px solid #777; }
.frame { width: 125px; border: 2px solid #222; border-top: 1px solid #eee; border-left: 1px solid #eee; }
.track { display: flex; height: 60px; border-top: 1px solid #777; border-bottom: 1px solid #e8e8e8; }
.curve { align-self: flex-start; width: 18px; height: 18px; margin: 4px 20px 0 11px; }
.ruler { flex: 1; height: 58px; }
.tick { stroke: #777; }
.num { font: 12px "Liberation Sans", Arial, sans-serif; text-anchor: middle; }
.current { fill: #8aafc6; stroke: #5a829c; }

.panel { flex: none; width: 180px; padding: 3px 8px 4px 0; border-bottom: 1px solid #777; }
.tabs { display: flex; height: 26px; padding-left: 1px; }
.tab { flex: 1; border-right: 1px solid #777; border-bottom: 1px solid #eee; }
.tab.cur { border-left: 1px solid #eee; border-bottom: 0; }
.tab svg { width: 28px; height: 25px; }
.name-row { display: flex; gap: 5px; margin: 4px 0 5px 5px; align-items: center; }
.object-name { flex: 1; height: 20px; color: #777; }
.swatch { width: 16px; height: 18px; background: #7d7d7d; }
.modifier { height: 23px; margin-left: 6px; }
.stack { height: 116px; margin: 5px 0 4px 6px; border: 2px solid #eee; border-top-color: #777; border-left-color: #777; background: #e1e1e1; }
.stack-tools { display: flex; align-items: center; height: 24px; padding-left: 8px; }
.st { width: 24px; height: 24px; }
.st svg { width: 24px; height: 24px; }
.stack-tools .sep { margin: 0 5px; }
.st.end { border: 1px solid #eee; border-top-color: #777; border-left-color: #777; }
hr { height: 3px; margin: 9px -4px 7px 2px; border: 0; border-top: 1px solid #eee; background: #111; }
.rollout { height: calc(100% - 245px); margin-left: 1px; border: 1px solid #e8e8e8; border-top-color: #777; border-left-color: #777; }

.status { display: flex; height: 50px; padding: 4px 2px 2px 0; }
.listener { display: flex; flex-direction: column; gap: 2px; width: 67px; padding-right: 6px; border-right: 1px solid #777; }
.pink { display: block; height: 21px; background: #dbc1c3; border-top: 1px solid #777; }
.listener input { width: 61px; height: 21px; padding: 0 2px; border: 0; border-top: 1px solid #777; font: 12px "Liberation Mono", monospace; background: #fff; }
.info { flex: 1; min-width: 0; padding-left: 2px; }
.row { display: flex; align-items: center; }
.grow { flex: 1; height: 22px; }
.prompt { height: 21px; margin-top: 3px; }
.ico { width: 12px; height: 16px; margin-left: 8px; }
.ico svg { width: 100%; height: 16px; }
.ico.wide { width: 16px; margin: 0 6px 0 12px; }
.axis-in { display: flex; align-items: center; justify-content: flex-end; width: 70px; margin-right: 12px; }
.info .field { width: 58px; height: 20px; }
.gridinfo { display: flex; flex-direction: column; gap: 3px; width: 100px; margin-left: 2px; }
.gridinfo .sunk { height: 22px; }
.bigkey { display: grid; place-items: center; width: 44px; margin: 0 2px 2px 2px; }
.bigkey svg { width: 26px; height: 12px; }
.keys, .filters { display: flex; flex-direction: column; }
.keys { width: 48px; margin-right: 3px; }
.keys .raised { height: 22px; }
.filters { gap: 2px; width: 116px; }
.filters .raised { height: 21px; }
.filters .combo { height: 20px; }
.play { display: flex; flex-direction: column; gap: 2px; width: 131px; padding-left: 6px; }
.play .row { height: 21px; }
.play .sep { margin: 0 3px; }
.pb { flex: none; width: 18px; height: 16px; margin: 0 2px 0 1px; }
.pb svg { width: 18px; height: 16px; }
.time { width: 62px; height: 20px; margin-left: 4px; }
.spin { width: 12px; height: 19px; margin: 0 2px; border: 1px solid #888; border-top-color: #eee; border-left-color: #eee; }
.spin svg { width: 10px; height: 17px; }
.views { display: grid; grid-template-columns: repeat(4, 1fr); width: 94px; border-left: 1px solid #999; }
.desk { display: flex; height: 3px; }
.desk i { flex: 54; background: #3a8d3a; }
.desk b { flex: 1023; background: #3f7ae0; }
.desk em { flex: 164; background: #2596ef; }
.marks { position: absolute; inset: 0; width: 100%; height: 100%; pointer-events: none; fill: none; stroke: #e60a0a; stroke-width: 3px; }
```
FILE: script.js
```js
const NS = 'http://www.w3.org/2000/svg';

function add(parent, tag, attrs, text) {
  const el = document.createElementNS(NS, tag);
  for (const key in attrs) el.setAttribute(key, attrs[key]);
  if (text !== undefined) el.textContent = text;
  parent.appendChild(el);
  return el;
}

// Node rows: x, y, name
const nodes = [
  [378, 88, 'Biped'], [378, 98, 'Pelvis'],
  [321, 109, 'Spine'], [400, 109, 'L Thigh'], [433, 109, 'R Thigh'],
  [277, 120, 'Spine1'], [367, 120, 'Tails'], [400, 120, 'L Calf'], [433, 120, 'R Calf'],
  [219, 131, 'Neck'], [301, 131, 'L breast'], [334, 131, 'R breast'], [400, 131, 'L Foot'], [433, 131, 'R Foot'],
  [169, 142, 'Head'], [235, 142, 'Clav L'], [268, 142, 'Clav R'], [400, 142, 'L Toe0'], [433, 142, 'R Toe0'],
  [137, 153, 'Jaw'], [169, 153, 'L Brow'], [202, 153, 'R Brow'],
  [235, 153, 'L Upp'], [268, 153, 'R Upp'],
  [235, 164, 'L Fore'], [268, 164, 'R Fore'],
  [235, 175, 'L Hand'], [268, 175, 'R Hand'],
  [235, 186, 'L Fing'], [268, 186, 'R Fing'],
  [235, 197, 'L Fing'], [268, 197, 'R Fing'],
  [466, 88, 'Skin']
];
const buses = 'M334 106H447M290 117H381M233 128H348M183 139H282M150 150H216';
const drops = 'M392 93V106M334 106V109M414 106V142M447 106V142M334 114V120M290 117V120M381 117V120M290 125V128M315 128V131M348 128V131M233 128V131M233 136V139M183 139V153M249 139V197M282 139V197M150 150V153M216 150V153';

function drawTree(offset, selected) {
  const g = add(document.getElementById('tree'), 'g', { transform: `translate(${offset} 0)` });
  const half = 'translate(0.5 0.5)';
  add(g, 'path', { d: drops, class: 'link', transform: half });
  if (selected) nodes.forEach(([x, y]) => add(g, 'rect', { x: x - 2, y: y - 2, width: 31, height: 9, class: 'halo' }));
  add(g, 'path', { d: buses, class: 'link', transform: half });
  nodes.forEach(([x, y, name]) => {
    const fill = selected ? '#fff' : name === 'Skin' ? '#8585ee' : '#45ee45';
    add(g, 'rect', { x: x + 0.5, y: y + 0.5, width: 26, height: 4, class: 'node', fill });
    add(g, 'text', { x: x + 6, y: y + 5, class: 'label' }, name);
  });
}
drawTree(0, false);
drawTree(363, true);

const ticks = document.getElementById('ticks');
add(ticks, 'rect', { x: 3, y: 0, width: 8, height: 59, class: 'current' });
for (let i = 0; i <= 50; i++) {
  const x = Math.round(7 + i * 18.8);
  const major = i % 5 === 0;
  add(ticks, 'path', { d: `M${x + 0.5} 0V${major ? 25 : 11}`, class: 'tick' });
  if (major) add(ticks, 'text', { x, y: 22, class: 'num' }, i);
}
add(ticks, 'path', { d: 'M0 25.5H955', class: 'tick' });
```
